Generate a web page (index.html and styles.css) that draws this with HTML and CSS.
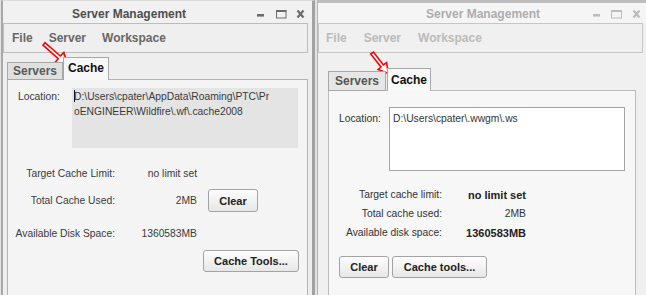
FILE: index.html
```html
<!DOCTYPE html>
<html lang="en">
<head>
  <meta charset="UTF-8">
  <title>Server Management – Cache</title>
  <link rel="stylesheet" href="styles.css">
</head>
<body>
  <div class="shot">
    <!-- old dialog -->
    <div class="win win-old">
      <div class="titlebar">
        <div class="title">Server Management</div>
        <svg class="ctrls" width="48" height="10" viewBox="0 0 48 10">
          <rect x="0" y="5" width="7" height="2.6"/>
          <rect class="hollow" x="19.5" y="1.5" width="9.5" height="7.5"/>
          <rect x="19" y="1" width="10.5" height="2"/>
          <path class="x" d="M40.5 1.5 L46.5 8.5 M46.5 1.5 L40.5 8.5"/>
        </svg>
      </div>
      <div class="menubar">
        <span>File</span><span>Server</span><span>Workspace</span>
      </div>
      <div class="tabs">
        <div class="tab">Servers</div>
        <div class="tab active">Cache</div>
      </div>
      <div class="panel">
        <div class="loc-row">
          <div class="loc-label">Location:</div>
          <div class="loc-field"><span class="caret"></span>D:\Users\cpater\AppData\Roaming\PTC\Pr<br>oENGINEER\Wildfire\.wf\.cache2008</div>
        </div>
        <div class="row row-a">
          <div class="lbl">Target Cache Limit:</div>
          <div class="val">no limit set</div>
        </div>
        <div class="row row-b">
          <div class="lbl">Total Cache Used:</div>
          <div class="val">2MB</div>
          <button class="btn btn-clear">Clear</button>
        </div>
        <div class="row row-c">
          <div class="lbl">Available Disk Space:</div>
          <div class="val">1360583MB</div>
        </div>
        <div class="row row-d">
          <button class="btn btn-tools">Cache Tools...</button>
        </div>
      </div>
    </div>

    <!-- new dialog -->
    <div class="win win-new">
      <div class="titlebar">
        <div class="title">Server Management</div>
        <svg class="ctrls" width="48" height="10" viewBox="0 0 48 10">
          <rect x="0" y="5" width="7" height="2.6"/>
          <rect class="hollow" x="18.5" y="1.5" width="10" height="7.5"/>
          <rect x="18" y="1" width="11" height="2"/>
          <path class="x" d="M40.5 1.5 L46.5 8.5 M46.5 1.5 L40.5 8.5"/>
        </svg>
      </div>
      <div class="menubar">
        <span>File</span><span>Server</span><span>Workspace</span>
      </div>
      <div class="tabs">
        <div class="tab">Servers</div>
        <div class="tab active">Cache</div>
      </div>
      <div class="panel">
        <div class="loc-row">
          <div class="loc-label">Location:</div>
          <div class="loc-field">D:\Users\cpater\.wwgm\.ws</div>
        </div>
        <div class="rows">
          <div class="row">
            <div class="lbl">Target cache limit:</div>
            <div class="val strong">no limit set</div>
          </div>
          <div class="row">
            <div class="lbl">Total cache used:</div>
            <div class="val">2MB</div>
          </div>
          <div class="row">
            <div class="lbl">Available disk space:</div>
            <div class="val strong">1360583MB</div>
          </div>
        </div>
        <div class="btn-row">
          <button class="btn btn-clear">Clear</button>
          <button class="btn btn-tools">Cache tools...</button>
        </div>
      </div>
    </div>

    <!-- red callout arrows pointing at the Cache tabs -->
    <svg class="marks" width="646" height="295" viewBox="0 0 646 295">
      <polygon points="45,42.6 60.3,56 63.8,52.6 67.5,64.5 55.2,62.2 58.2,58.7 43,45.2"/>
      <polygon points="373.4,52 383.4,65 386.6,62.6 388.3,73.4 378.2,69.4 381,67 370.7,54"/>
    </svg>
  </div>
</body>
</html>
```

FILE: styles.css
```css
* {
  box-sizing: border-box;
}
html, body {
  margin: 0;
}
body {
  width: 646px;
  height: 295px;
  overflow: hidden;
  background: #e2e2e2;
  font-family: "Liberation Sans", Arial, sans-serif;
  color: #333;
}
.shot {
  position: relative;
  display: flex;
  height: 295px;
  padding-left: 1px;
}

/* windows */
.win {
  display: flex;
  flex-direction: column;
  background: #eeeeee;
  overflow: hidden;
}
.win-old {
  width: 314px;
  margin-right: 2px;
  border-left: 2px solid #a9a9a9;
  border-right: 3px solid #a2a2a2;
  border-top: 1px solid #dadada;
}
.win-new {
  flex: 1;
  border-left: 1px solid #b6b6b6;
  border-top: 3px solid #bdbdbd;
  background: #f0f0f0;
}

/* title bar */
.titlebar {
  display: flex;
  align-items: center;
  height: 22px;
  padding-top: 3px;
  background: #f1f1f1;
}
.win-new .titlebar {
  height: 20px;
  padding-top: 1px;
  background: #f5f5f5;
}
.title {
  flex: 1;
  font-size: 12px;
  font-weight: bold;
  color: #4e4e4e;
  padding-left: 69px;
}
.win-new .title {
  padding-left: 108px;
  color: #adadad;
}
.ctrls {
  margin-right: 7px;
  fill: #6c6c6c;
  stroke: #6c6c6c;
}
.win-new .ctrls {
  margin-right: 5px;
  fill: #bcbcbc;
  stroke: #bcbcbc;
}
.ctrls rect {
  stroke: none;
}
.ctrls .hollow {
  fill: none;
  stroke: inherit;
  stroke-width: 1;
}
.ctrls .x {
  fill: none;
  stroke-width: 2.2;
}

/* menu bar */
.menubar {
  display: flex;
  align-items: center;
  gap: 16px;
  height: 30px;
  margin-right: 4px;
  padding-left: 8px;
  border: 1px solid #bdbdbd;
  background: #efefef;
  font-size: 12px;
  font-weight: bold;
  color: #676767;
}
.win-new .menubar {
  margin-right: 3px;
  padding-left: 7px;
  gap: 17px;
  border-color: #c6c6c6;
  background: #f0f0f0;
  color: #bbbbbb;
}

/* tabs */
.tabs {
  position: relative;
  z-index: 1;
  display: flex;
  align-items: flex-end;
  margin: 4px 0 -1px 4px;
}
.win-new .tabs {
  margin: 15px 0 -1px 10px;
}
.tab {
  height: 18px;
  width: 56px;
  border: 1px solid #a8a8a8;
  background: #e0e0e0;
  font-size: 12px;
  font-weight: bold;
  line-height: 16px;
  text-align: center;
  color: #5a5a5a;
}
.tab.active {
  width: 46px;
  height: 23px;
  line-height: 21px;
  border-bottom: none;
  background: #f7f7f7;
  color: #111;
}
.win-new .tab {
  width: 58px;
  height: 20px;
  line-height: 18px;
  margin-right: 1px;
  background: #e6e6e6;
  color: #555;
}
.win-new .tab.active {
  width: 44px;
  height: 23px;
  line-height: 22px;
  margin-right: 0;
  background: #f9f9f9;
  color: #111;
}

/* cache panel */
.panel {
  flex: 1;
  width: 301px;
  margin-left: 4px;
  padding: 8px 9px 0 10px;
  border: 1px solid #b4b4b4;
  border-bottom: none;
  background-color: #f7f7f7;
  background-image: repeating-conic-gradient(#f2f2f2 0 25%, transparent 0 50%);
  background-size: 2px 2px;
  font-size: 10.3px;
  color: #3a3a3a;
}
.win-new .panel {
  width: 308px;
  margin-left: 10px;
  padding: 16px 10px 0 10px;
  border-color: #bcbcbc;
  background-color: #f9f9f9;
  background-image: repeating-conic-gradient(#f5f5f5 0 25%, transparent 0 50%);
  color: #333;
}
.loc-row {
  display: flex;
}
.loc-label {
  width: 54px;
  padding-top: 1px;
  line-height: 15px;
}
.loc-field {
  flex: 1;
  height: 60px;
  padding: 1px 2px 0 2px;
  line-height: 15px;
  background: #e4e4e4;
}
.caret {
  display: inline-block;
  width: 1px;
  height: 12px;
  margin-right: -1px;
  vertical-align: -2px;
  background: #111;
}
.win-new .loc-label {
  width: 50px;
  padding-top: 4px;
}
.win-new .loc-field {
  height: 64px;
  padding: 3px 3px 0 3px;
  border: 1px solid #a4a4a4;
  background: #fff;
}

.row {
  display: flex;
  align-items: center;
  height: 20px;
  margin-left: -10px;
}
.lbl {
  width: 107px;
  text-align: right;
  white-space: nowrap;
}
.val {
  width: 82px;
  text-align: right;
  white-space: nowrap;
}
.row-a {
  margin-top: 15px;
}
.row-b {
  height: 23px;
  margin-top: 6px;
}
.row-c {
  margin-top: 11px;
}
.row-d {
  height: 22px;
  margin-top: 7px;
  margin-right: -1px;
  justify-content: flex-end;
}

.win-new .rows {
  margin-top: 14px;
}
.win-new .row {
  height: 19px;
}
.win-new .lbl {
  width: 113px;
}
.win-new .val {
  width: 84px;
}
.val.strong {
  font-size: 11px;
  font-weight: bold;
  color: #222;
}
.btn-row {
  display: flex;
  gap: 3px;
  margin-top: 14px;
}

/* buttons */
.btn {
  height: 22px;
  padding: 0;
  border: 1px solid #a3a3a3;
  border-radius: 3px;
  background: linear-gradient(#fdfdfd, #e7e7e7);
  font-family: "Liberation Sans", Arial, sans-serif;
  font-size: 11px;
  font-weight: bold;
  color: #222;
}
.btn-clear {
  width: 50px;
}
.row-b .btn-clear {
  height: 23px;
  margin-left: 11px;
}
.btn-tools {
  width: 96px;
}
.win-new .btn-tools {
  width: 95px;
}

/* callout arrows */
.marks {
  position: absolute;
  top: 0;
  left: 0;
  pointer-events: none;
}
.marks polygon {
  fill: #fff;
  stroke: #ff0000;
  stroke-width: 1.6;
  stroke-linejoin: miter;
}
```
